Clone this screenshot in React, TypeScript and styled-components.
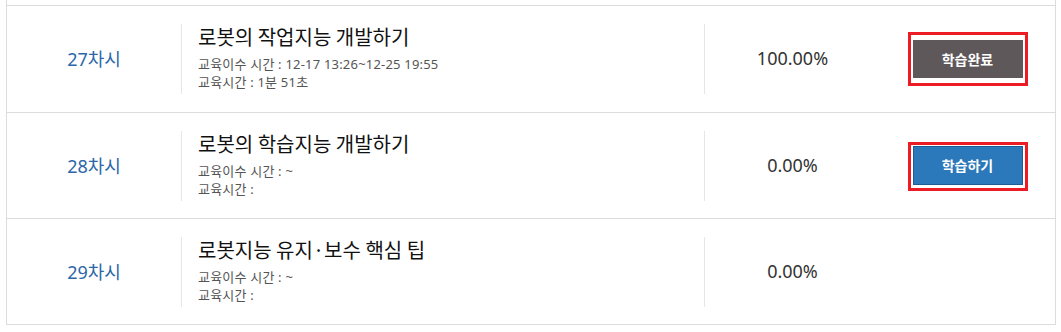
import React from "react";
import styled, { createGlobalStyle } from "styled-components";

const GlobalStyle = createGlobalStyle`
  html, body {
    margin: 0;
    padding: 0;
    background: #ffffff;
  }
  body {
    font-family: "Noto Sans", "Noto Sans CJK KR", sans-serif;
  }
`;

const Board = styled.div`
  margin-left: 6px;
  width: 1050px;
  box-sizing: border-box;
  border-left: 1px solid #dcdcdc;
  border-right: 1px solid #dcdcdc;
`;

const CutRow = styled.div`
  height: 5px;
  border-bottom: 1px solid #dcdcdc;
`;

const Row = styled.div`
  display: grid;
  grid-template-columns: 174px 523px 176px 1fr;
  padding: 18px 0 17px;
  border-bottom: 1px solid #dcdcdc;

  &:nth-child(2) {
    padding-bottom: 18px;
  }
`;

const Cell = styled.div<{ $divider?: boolean }>`
  height: 70px;
  display: flex;
  align-items: center;
  justify-content: center;
  border-left: ${({ $divider }) => ($divider ? "1px solid #e6e6e6" : "none")};
`;

const Chapter = styled.span`
  color: #2b67a8;
  font-size: 18px;
  margin-top: -3px;
`;

const Info = styled.div`
  height: 70px;
  border-left: 1px solid #e6e6e6;
  padding-left: 16px;
  display: flex;
  flex-direction: column;
`;

const Title = styled.div`
  font-family: "Noto Sans CJK KR", sans-serif;
  font-size: 20px;
  font-weight: 400;
  line-height: 26px;
  color: #111111;
  margin-bottom: 5px;
`;

const Meta = styled.div`
  font-size: 13px;
  line-height: 18px;
  color: #555555;
  letter-spacing: 0.2px;
`;

const Percent = styled.span`
  font-size: 18px;
  color: #333333;
  margin-top: -3px;
`;

const Mark = styled.div<{ $pad: string }>`
  border: 3px solid #ed1c24;
  padding: ${({ $pad }) => $pad};
  display: flex;
`;

const StudyButton = styled.button<{ $done?: boolean }>`
  width: 110px;
  height: ${({ $done }) => ($done ? "38px" : "39px")};
  border: ${({ $done }) => ($done ? "none" : "1px solid #1d5d97")};
  background: ${({ $done }) => ($done ? "#5e585b" : "#2b78ba")};
  color: #ffffff;
  font-family: "Noto Sans CJK KR", sans-serif;
  font-size: 14px;
  font-weight: 700;
  padding: 0;
  cursor: pointer;
`;

type Lesson = {
  no: number;
  title: string;
  period: string;
  duration: string;
  rate: string;
  status?: "done" | "study";
};

const lessons: Lesson[] = [
  {
    no: 27,
    title: "로봇의 작업지능 개발하기",
    period: "12-17 13:26~12-25 19:55",
    duration: "1분 51초",
    rate: "100.00%",
    status: "done",
  },
  {
    no: 28,
    title: "로봇의 학습지능 개발하기",
    period: "~",
    duration: "",
    rate: "0.00%",
    status: "study",
  },
  {
    no: 29,
    title: "로봇지능 유지·보수 핵심 팁",
    period: "~",
    duration: "",
    rate: "0.00%",
  },
];

export default function App() {
  return (
    <>
      <GlobalStyle />
      <Board>
        <CutRow />
        {lessons.map((l) => (
          <Row key={l.no}>
            <Cell>
              <Chapter>{l.no}차시</Chapter>
            </Cell>
            <Info>
              <Title>{l.title}</Title>
              <Meta>교육이수 시간 : {l.period}</Meta>
              <Meta>교육시간 : {l.duration}</Meta>
            </Info>
            <Cell $divider>
              <Percent>{l.rate}</Percent>
            </Cell>
            <Cell>
              {l.status === "done" && (
                <Mark $pad="5px 2px">
                  <StudyButton $done>학습완료</StudyButton>
                </Mark>
              )}
              {l.status === "study" && (
                <Mark $pad="1px 2px 3px">
                  <StudyButton>학습하기</StudyButton>
                </Mark>
              )}
            </Cell>
          </Row>
        ))}
      </Board>
    </>
  );
}
